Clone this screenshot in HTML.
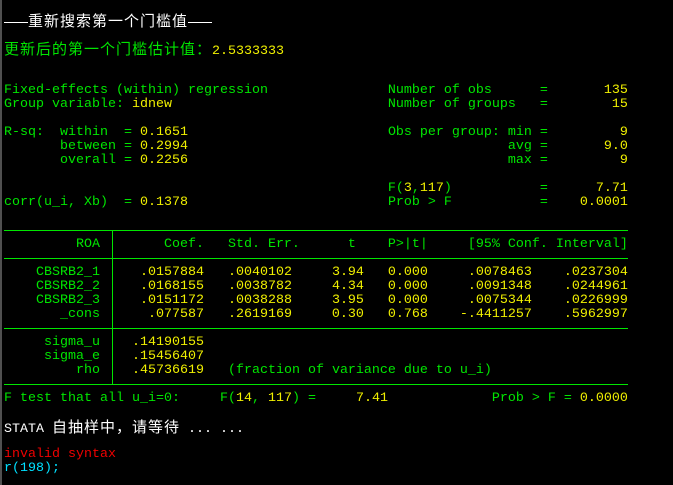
<!DOCTYPE html>
<html><head><meta charset="utf-8"><style>
html,body{margin:0;padding:0;background:#000;}
body{width:673px;height:485px;position:relative;overflow:hidden;}
.t{position:absolute;left:4px;top:14px;margin:0;font-family:"Liberation Mono",monospace;font-size:13.33px;line-height:14px;color:#00e600;}
.t div{height:14px;line-height:14px;white-space:pre;}
.y{color:#f0f000}.w{color:#fff}.r{color:#f00000}.c{color:#00e0ff}
.cjk{font-family:"Noto Sans CJK SC",sans-serif;font-size:15px;letter-spacing:1px;line-height:14px;}
.d{display:inline-block;width:24px;height:1px;background:#fff;vertical-align:middle;}
.h{position:absolute;left:4px;width:624px;height:1px;background:#00e600;}
.v{position:absolute;left:112px;top:230px;width:1px;height:155px;background:#00e600;}
.lb{position:absolute;left:0;top:0;width:2px;height:485px;background:#505050;}
</style></head><body>
<div class="lb"></div>
<div class="t"><div><span class="w"><span class="d"></span><span class="cjk">重新搜索第一个门槛值</span><span class="d"></span></span></div><div></div><div><span class="cjk">更新后的第一个门槛估计值：</span><span class="y">2.5333333</span></div><div></div><div></div><div>Fixed-effects (within) regression               Number of obs      = <span class="y">      135</span></div><div>Group variable: <span class="y">idnew</span>                           Number of groups   = <span class="y">       15</span></div><div></div><div>R-sq:  within  = <span class="y">0.1651</span>                         Obs per group: min = <span class="y">        9</span></div><div>       between = <span class="y">0.2994</span>                                        avg = <span class="y">      9.0</span></div><div>       overall = <span class="y">0.2256</span>                                        max = <span class="y">        9</span></div><div></div><div>                                                F(<span class="y">3</span>,<span class="y">117</span>)           = <span class="y">     7.71</span></div><div>corr(u_i, Xb)  = <span class="y">0.1378</span>                         Prob &gt; F           = <span class="y">   0.0001</span></div><div></div><div></div><div>         ROA        Coef.   Std. Err.      t    P&gt;|t|     [95% Conf. Interval]</div><div></div><div>    CBSRB2_1     <span class="y">.0157884   .0040102     3.94   0.000     .0078463    .0237304</span></div><div>    CBSRB2_2     <span class="y">.0168155   .0038782     4.34   0.000     .0091348    .0244961</span></div><div>    CBSRB2_3     <span class="y">.0151172   .0038288     3.95   0.000     .0075344    .0226999</span></div><div>       _cons      <span class="y">.077587   .2619169     0.30   0.768    -.4411257    .5962997</span></div><div></div><div>     sigma_u    <span class="y">.14190155</span></div><div>     sigma_e    <span class="y">.15456407</span></div><div>         rho    <span class="y">.45736619</span>   (fraction of variance due to u_i)</div><div></div><div>F test that all u_i=0:     F(<span class="y">14</span>, <span class="y">117</span>) =     <span class="y">7.41</span>             Prob &gt; F = <span class="y">0.0000</span></div><div></div><div><span class="w">STATA <span class="cjk">自抽样中，请等待</span> ... ...</span></div><div></div><div><span class="r">invalid syntax</span></div><div><span class="c">r(198);</span></div></div>
<div class="h" style="top:230px"></div>
<div class="h" style="top:258px"></div>
<div class="h" style="top:328px"></div>
<div class="h" style="top:384px"></div>
<div class="v"></div>
</body></html>
